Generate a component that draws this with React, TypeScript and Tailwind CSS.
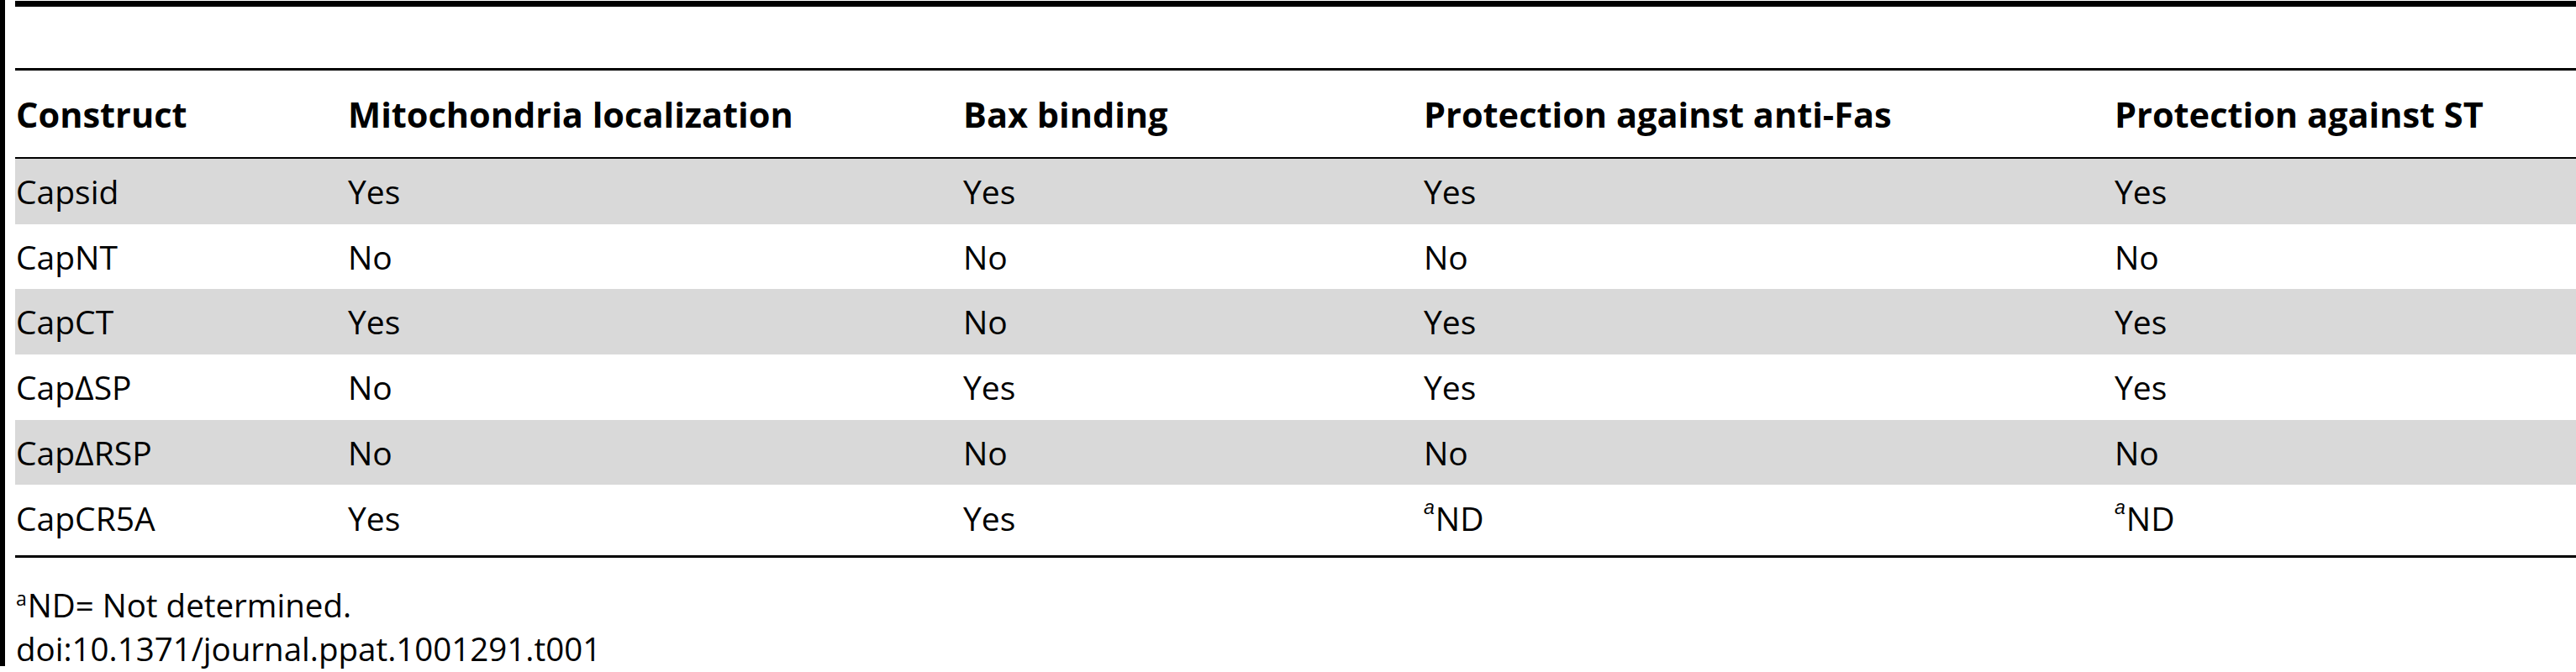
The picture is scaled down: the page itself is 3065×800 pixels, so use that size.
import React from "react";

type Row = { name: string; cells: React.ReactNode[]; grey: boolean; h: string };

const ND = (
  <span>
    <sup className="font-['Liberation_Sans',sans-serif] italic text-[23px] top-[-20px] mr-[1px]">a</sup>ND
  </span>
);

const rows: Row[] = [
  { name: "Capsid", cells: ["Yes", "Yes", "Yes", "Yes"], grey: true, h: "h-[78px]" },
  { name: "CapNT", cells: ["No", "No", "No", "No"], grey: false, h: "h-[77px]" },
  { name: "CapCT", cells: ["Yes", "No", "Yes", "Yes"], grey: true, h: "h-[78px]" },
  { name: "Cap\u0394SP", cells: ["No", "Yes", "Yes", "Yes"], grey: false, h: "h-[78px]" },
  { name: "Cap\u0394RSP", cells: ["No", "No", "No", "No"], grey: true, h: "h-[77px]" },
  { name: "CapCR5A", cells: ["Yes", "Yes", ND, ND], grey: false, h: "h-[80px]" },
];

const grid = "grid grid-cols-[396px_732px_548px_822px_1fr] items-center";

export default function App() {
  return (
    <div className="w-[3065px] h-[800px] bg-white flex text-black font-['Open_Sans',sans-serif] overflow-hidden">
      <div className="w-[6px] h-[793px] bg-black shrink-0" />
      <div className="flex-1 pl-[12px] flex flex-col">
        <div className="mt-[1px] h-[7px] bg-black" />
        <div className="h-[73px]" />
        <div className="h-[3px] bg-black" />
        <div className={`${grid} h-[103px] font-bold text-[41.5px] leading-[42px]`}>
          <div className="pl-[1px]">Construct</div>
          <div>Mitochondria localization</div>
          <div>Bax binding</div>
          <div>Protection against anti-Fas</div>
          <div>Protection against ST</div>
        </div>
        <div className="h-[2px] bg-black" />
        {rows.map((r) => (
          <div
            key={r.name}
            className={`${grid} ${r.h} text-[39px] leading-[40px] ${r.grey ? "bg-[#d9d9d9]" : "bg-white"}`}
          >
            <div className="pl-[1px]">{r.name}</div>
            {r.cells.map((c, i) => (
              <div key={i}>{c}</div>
            ))}
          </div>
        ))}
        <div className="h-[4px]" />
        <div className="h-[3px] bg-black" />
        <div className="mt-[30px] text-[38.5px] leading-[52px] pl-[1px]">
          <div>
            <sup className="text-[23px] top-[-14px] mr-[1px]">a</sup>ND= Not determined.
          </div>
          <div>doi:10.1371/journal.ppat.1001291.t001</div>
        </div>
      </div>
    </div>
  );
}
